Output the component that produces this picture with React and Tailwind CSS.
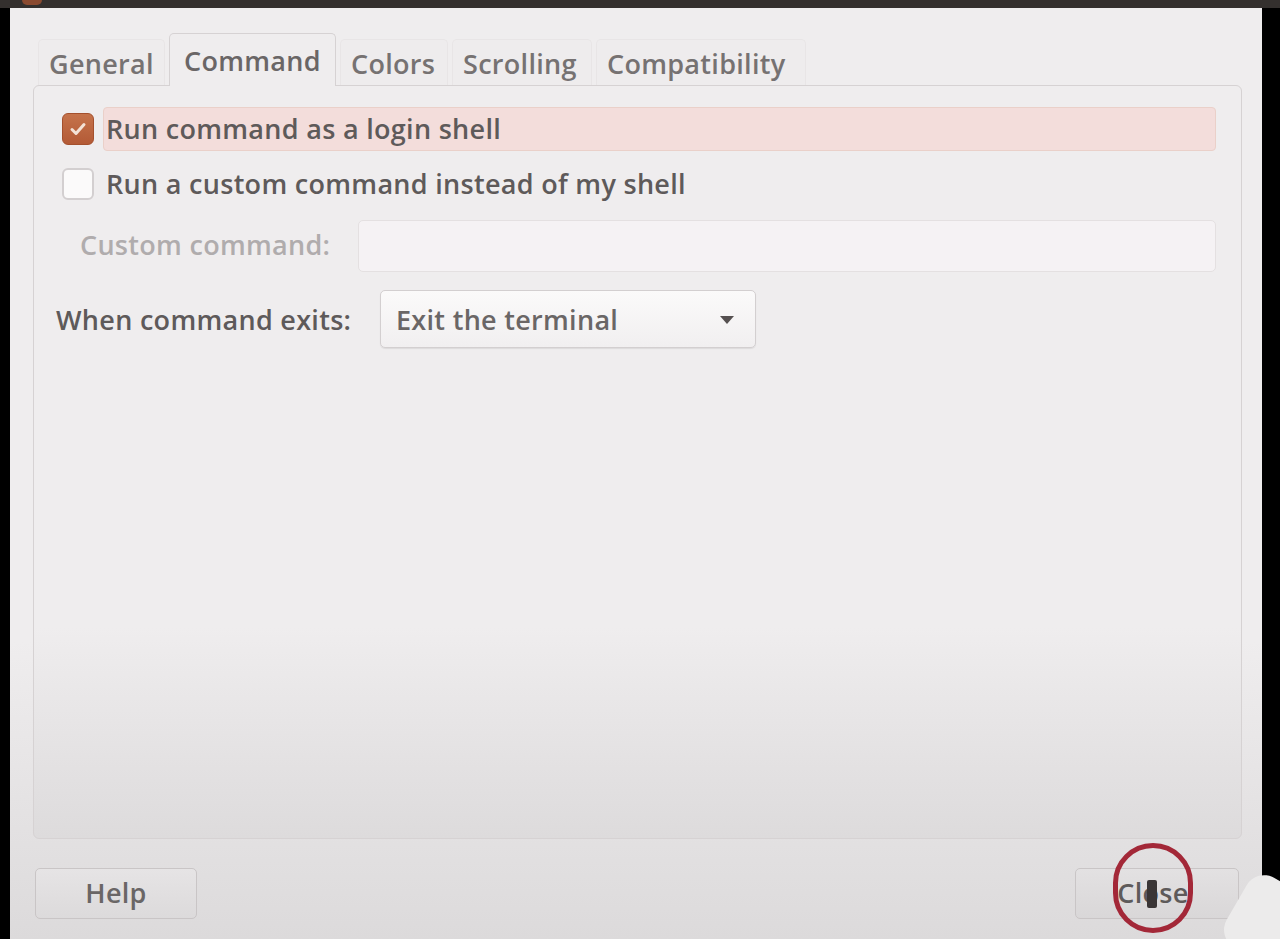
import { useState } from "react";

const font = { fontFamily: '"Open Sans", "Noto Sans", sans-serif' };

const tabs = [
  { label: "General", w: "w-[127px]" },
  { label: "Command", w: "w-[167px]" },
  { label: "Colors", w: "w-[108px]" },
  { label: "Scrolling", w: "w-[140px]" },
  { label: "Compatibility", w: "w-[210px]" },
];

function Tab({ label, w, active, onClick }) {
  if (active) {
    return (
      <button
        onClick={onClick}
        className={`relative -mb-px h-[53px] ${w} rounded-t-[5px] border border-b-0 border-[#d6d2d3] bg-[#efedee] pl-[14px] pt-[2px] text-left text-[#6a6666]`}
      >
        {label}
      </button>
    );
  }
  return (
    <button
      onClick={onClick}
      className={`mt-[6px] h-[46px] ${w} rounded-t-[5px] border border-b-0 border-[#e8e5e6] bg-[#eeeced] pl-[10px] pt-[4px] text-left text-[#767272]`}
    >
      {label}
    </button>
  );
}

function Check({ checked, onClick }) {
  return checked ? (
    <span
      onClick={onClick}
      className="flex h-[32px] w-[32px] shrink-0 items-center justify-center rounded-[6px] border border-[#a4502d] bg-gradient-to-b from-[#c5734b] to-[#b35a36]"
    >
      <svg width="20" height="20" viewBox="0 0 20 20">
        <path d="M4 10.5l4 4 8-9" fill="none" stroke="#f3e2d6" strokeWidth="3" strokeLinecap="round" strokeLinejoin="round" />
      </svg>
    </span>
  ) : (
    <span
      onClick={onClick}
      className="h-[32px] w-[32px] shrink-0 rounded-[6px] border-2 border-[#d3cfd0] bg-[#fbfafa]"
    />
  );
}

export default function App() {
  const [tab, setTab] = useState("Command");
  const [login, setLogin] = useState(true);
  const [custom, setCustom] = useState(false);

  return (
    <div style={font} className="flex h-[939px] w-[1280px] flex-col overflow-hidden bg-black text-[27px] font-semibold tracking-[0.3px]">
      <div className="flex h-[8px] shrink-0 bg-[#34302e]">
        <div className="ml-[22px] h-[5px] w-[20px] rounded-b-full bg-[#8a4a30]" />
      </div>
      <div className="flex flex-1">
        <div className="w-[10px] shrink-0 bg-black" />
        <div className="relative flex w-[1252px] flex-col bg-[linear-gradient(to_bottom,#efedee_0%,#efedee_68%,#dcdadb_100%)] pl-[23px] pr-[20px] pt-[25px]">
          <div className="flex items-end gap-[4px] pl-[5px]">
            {tabs.map((t) => (
              <Tab key={t.label} label={t.label} w={t.w} active={tab === t.label} onClick={() => setTab(t.label)} />
            ))}
          </div>

          <div className="flex h-[754px] flex-col rounded-[6px] border border-[#d6d2d3] bg-[linear-gradient(to_bottom,#efedee_0%,#efedee_72%,#dddbdc_100%)] pl-[22px] pr-[25px] pt-[21px]">
            <div className="flex items-center gap-[9px] pl-[6px]">
              <Check checked={login} onClick={() => setLogin(!login)} />
              <div className="flex h-[44px] flex-1 items-center rounded-[4px] border border-[#ead0c9] bg-[#f3dddb] pl-[2px] text-[#5e5a5a]">
                Run command as a login shell
              </div>
            </div>

            <div className="mt-[13px] flex items-center gap-[9px] pl-[6px]">
              <Check checked={custom} onClick={() => setCustom(!custom)} />
              <span className="pl-[3px] text-[#5e5a5a]">Run a custom command instead of my shell</span>
            </div>

            <div className="mt-[15px] flex items-center">
              <span className="w-[302px] shrink-0 pl-[24px] text-[#b0acad]">Custom command:</span>
              <div className="h-[52px] flex-1 rounded-[5px] border border-[#e4e0e1] bg-[#f5f2f4]" />
            </div>

            <div className="mt-[18px] flex items-center">
              <span className="w-[324px] shrink-0 pt-[4px] text-[#5e5a5a]">When command exits:</span>
              <button className="flex h-[58px] w-[376px] items-center justify-between rounded-[5px] border border-[#d3cfd0] bg-[linear-gradient(to_bottom,#fbfafa,#f1eff0)] pl-[15px] pr-[20px] pt-[3px] text-[#6a6666] shadow-[0_1px_1px_rgba(0,0,0,0.08)]">
                <span>Exit the terminal</span>
                <svg width="16" height="10" viewBox="0 0 16 10">
                  <path d="M1 1h14L8 9z" fill="#555050" />
                </svg>
              </button>
            </div>
          </div>

          <div className="mt-[29px] flex justify-between pr-[3px] pl-[2px]">
            <button className="h-[51px] w-[162px] rounded-[5px] border border-[#c9c5c6] bg-[linear-gradient(to_bottom,#e6e4e5,#dcdadb)] text-[#6a6666]">
              Help
            </button>
            <div className="relative">
              <button className="h-[51px] w-[164px] rounded-[5px] border border-[#c9c5c6] bg-[linear-gradient(to_bottom,#e3e1e2,#d9d7d8)] pr-[8px] text-[#5e5a5a]">
                Close
              </button>
              <div className="absolute left-[38px] top-[-25px] h-[90px] w-[80px] rounded-full border-[5px] border-[#a32838]" />
              <div className="absolute left-[72px] top-[12px] h-[28px] w-[10px] rounded-[2px] bg-[#3a3636]" />
            </div>
          </div>
        </div>
        <div className="w-[18px] shrink-0 bg-black" />
      </div>
      <div className="absolute left-[1232px] top-[880px] h-[80px] w-[70px] rotate-[30deg] rounded-[20px] bg-[#ecebeb]" />
    </div>
  );
}
